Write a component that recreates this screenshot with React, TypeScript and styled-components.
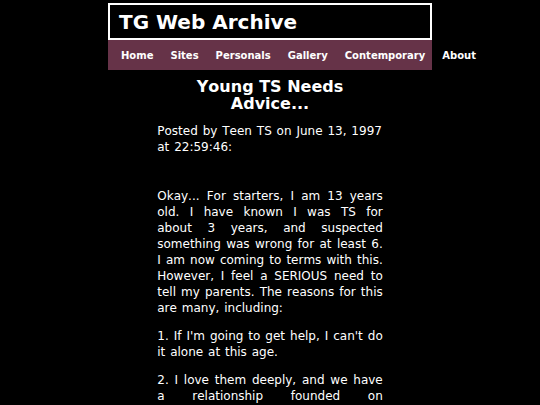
import React from 'react';
import styled, { createGlobalStyle } from 'styled-components';

const GlobalStyle = createGlobalStyle`
  html, body {
    margin: 0;
    padding: 0;
    background: #000;
  }
  body {
    font-family: "DejaVu Sans", Verdana, sans-serif;
    color: #fff;
  }
`;

const Header = styled.header`
  width: 60%;
  margin: 3px auto 0;
`;

const TitleBox = styled.div`
  border: 2px solid #fff;
  background: #000;
  padding: 5px 9px 4px;
`;

const SiteTitle = styled.h1`
  margin: 0;
  font-size: 20px;
  line-height: 24px;
  font-weight: bold;
  color: #fff;
`;

const Nav = styled.nav`
  display: flex;
  flex-wrap: nowrap;
  align-items: center;
  gap: 17px;
  height: 30px;
  padding-left: 13px;
  background: #663348;
`;

const NavLink = styled.a`
  flex-shrink: 0;
  font-size: 10px;
  font-weight: bold;
  color: #fff;
  text-decoration: none;
  white-space: nowrap;
`;

const Content = styled.main`
  width: 225.5px;
  margin: 0 auto;
  font-kerning: none;
`;

const PostTitle = styled.h2`
  margin: 8px 0 11px;
  font-size: 16px;
  line-height: 17px;
  font-weight: bold;
  text-align: center;
`;

const Meta = styled.p`
  margin: 0 0 33px;
  font-size: 12px;
  line-height: 16px;
  word-spacing: 1.05px;
`;

const Para = styled.p`
  margin: 0 0 12px;
  font-size: 12px;
  line-height: 16px;
  word-spacing: 1.05px;
  text-align: justify;
`;

const links = ['Home', 'Sites', 'Personals', 'Gallery', 'Contemporary', 'About'];

export default function App() {
  return (
    <>
      <GlobalStyle />
      <Header>
        <TitleBox>
          <SiteTitle>TG Web Archive</SiteTitle>
        </TitleBox>
        <Nav>
          {links.map((l) => (
            <NavLink key={l} href="#">
              {l}
            </NavLink>
          ))}
        </Nav>
      </Header>
      <Content>
        <PostTitle>Young TS Needs Advice...</PostTitle>
        <Meta>Posted by Teen TS on June 13, 1997 at 22:59:46:</Meta>
        <Para>
          Okay... For starters, I am 13 years old. I have known I was TS for about 3 years, and
          suspected something was wrong for at least 6. I am now coming to terms with this.
          However, I feel a SERIOUS need to tell my parents. The reasons for this are many,
          including:
        </Para>
        <Para>1. If I'm going to get help, I can't do it alone at this age.</Para>
        <Para>
          2. I love them deeply, and we have a relationship founded on understanding and
          honesty. I don't want to keep this from them any longer.
        </Para>
      </Content>
    </>
  );
}
